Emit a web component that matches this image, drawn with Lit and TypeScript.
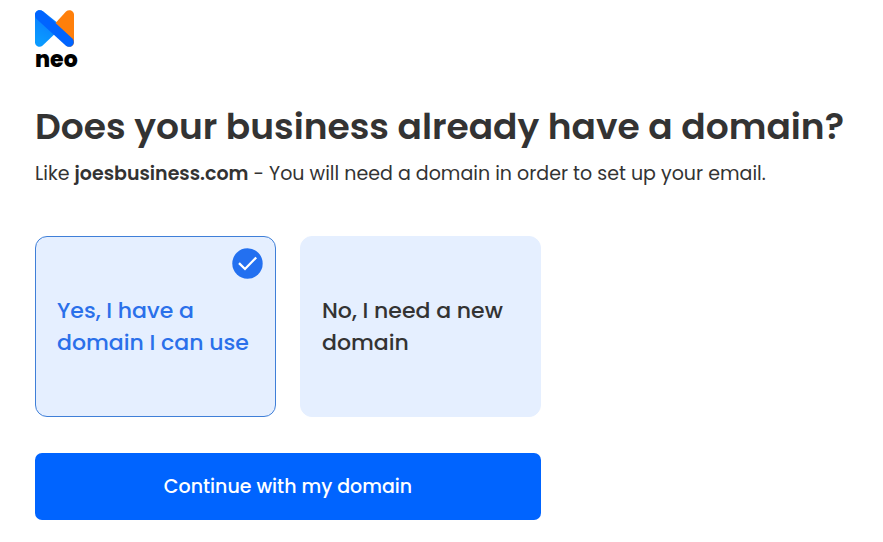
import { LitElement, html, css } from "lit";
import { customElement, state } from "lit/decorators.js";

type Choice = "yes" | "no";

@customElement("neo-logo")
class NeoLogo extends LitElement {
  static styles = css`
    :host {
      display: flex;
      flex-direction: column;
      align-items: flex-start;
    }
    .mark {
      display: block;
      width: 39px;
      height: 37px;
    }
    .word {
      font-size: 22px;
      line-height: 26px;
      font-weight: 800;
      color: #000;
    }
  `;

  render() {
    return html`
      <svg class="mark" viewBox="0 0 117 110" aria-hidden="true">
        <defs>
          <linearGradient id="left" x1="0.6" y1="0.2" x2="0.3" y2="0.9">
            <stop offset="0" stop-color="#0a7cff" />
            <stop offset="1" stop-color="#0a9aff" />
          </linearGradient>
        </defs>
        <path d="M0 14V96C0 108 14 114 23 106L82 50L25 4C14 -4 0 2 0 14Z" fill="url(#left)" />
        <path d="M117 14V96C117 108 103 114 94 106L46 56L93 4C103 -4 117 2 117 14Z" fill="#ff7f0a" />
        <path d="M0 14C0 2 14 -4 24 4L113 86C121 96 114 110 103 110C98 110 95 108 91 105L4 26C1 22 0 18 0 14Z" fill="#0064ff" />
      </svg>
      <span class="word">neo</span>
    `;
  }
}

@customElement("app-root")
class AppRoot extends LitElement {
  static styles = css`
    :host {
      display: block;
      box-sizing: border-box;
      padding: 10px 35px 22px;
      background: #fff;
      color: #333;
      font-family: Poppins, Inter, "Open Sans", sans-serif;
    }
    h1 {
      margin: 30px 0 0;
      font-size: 36px;
      line-height: 48px;
      font-weight: 600;
    }
    .lead {
      margin: 8px 0 0;
      font-size: 19px;
      line-height: 30px;
    }
    .lead strong {
      font-weight: 600;
    }
    form {
      max-width: 506px;
      margin-top: 47px;
    }
    fieldset {
      display: grid;
      grid-template-columns: 1fr 1fr;
      gap: 24px;
      margin: 0;
      padding: 0;
      border: 0;
    }
    .card {
      position: relative;
      display: flex;
      align-items: center;
      box-sizing: border-box;
      min-height: 181px;
      padding: 16px 21px;
      border: 1px solid #e5efff;
      border-radius: 12px;
      background: #e5efff;
      font-size: 22px;
      line-height: 32px;
      font-weight: 500;
      cursor: pointer;
    }
    .card:has(input:checked) {
      border-color: #3f7fd8;
      color: #2a70ea;
    }
    .card input {
      position: absolute;
      inset: 0;
      width: 100%;
      height: 100%;
      margin: 0;
      opacity: 0;
      cursor: pointer;
    }
    .tick {
      position: absolute;
      top: 11px;
      right: 12px;
      width: 31px;
      height: 31px;
    }
    button {
      display: block;
      width: 100%;
      margin-top: 36px;
      padding: 18px 24px;
      border: 0;
      border-radius: 7px;
      background: #0064ff;
      color: #fff;
      font-family: inherit;
      font-size: 19px;
      line-height: 31px;
      font-weight: 500;
      cursor: pointer;
    }
  `;

  @state() private choice: Choice = "yes";

  private card(value: Choice, label: string) {
    const checked = this.choice === value;
    return html`
      <label class="card">
        <input type="radio" name="domain" .value=${value} .checked=${checked}
          @change=${() => (this.choice = value)} />
        <span>${label}</span>
        ${checked
          ? html`<svg class="tick" viewBox="0 0 31 31" aria-hidden="true">
              <circle cx="15.5" cy="15.5" r="15.2" fill="#2370f0" />
              <path d="M7 15.2L13 21L24.2 9.5" fill="none" stroke="#fff" stroke-width="2.3" />
            </svg>`
          : null}
      </label>
    `;
  }

  render() {
    return html`
      <header><neo-logo></neo-logo></header>
      <main>
        <h1>Does your business already have a domain?</h1>
        <p class="lead">
          Like <strong>joesbusiness.com</strong> - You will need a domain in order to set up your email.
        </p>
        <form @submit=${(e: Event) => e.preventDefault()}>
          <fieldset aria-label="Domain">
            ${this.card("yes", "Yes, I have a domain I can use")}
            ${this.card("no", "No, I need a new domain")}
          </fieldset>
          <button type="submit">Continue with my domain</button>
        </form>
      </main>
    `;
  }
}
